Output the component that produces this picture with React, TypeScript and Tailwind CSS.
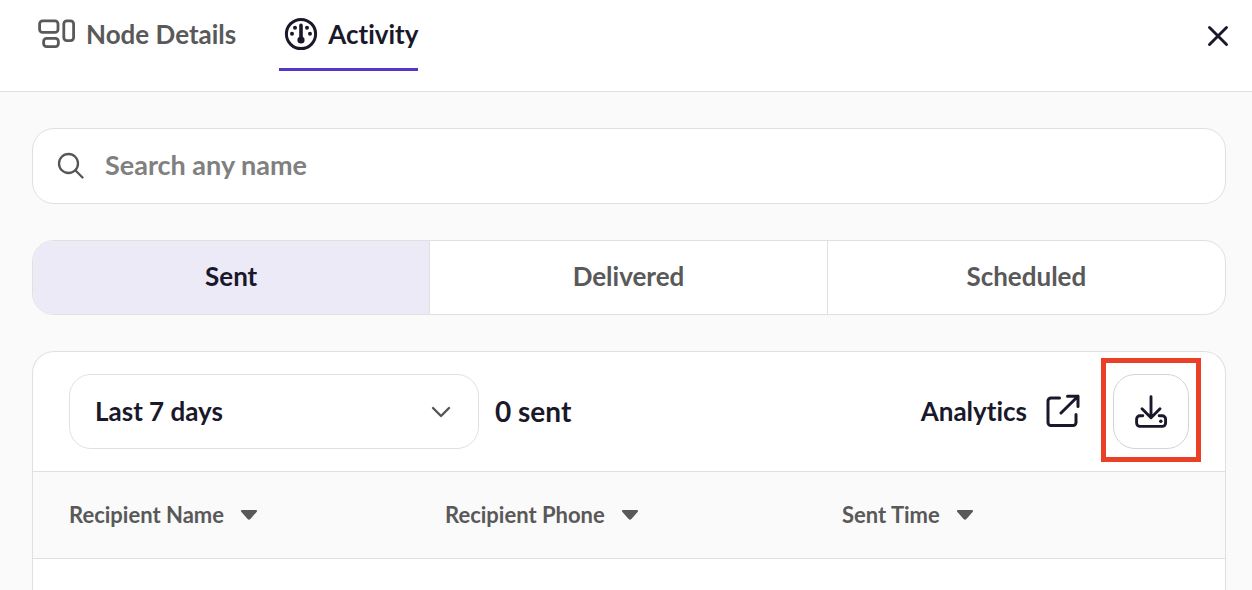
import React, { useState } from 'react';

type IconProps = { className?: string };

const NodesIcon = ({ className }: IconProps) => (
  <svg className={className} width="38" height="30" viewBox="0 0 38 30" fill="none" stroke="currentColor" strokeWidth="2.8" aria-hidden="true">
    <rect x="1.6" y="1.8" width="18.4" height="11.6" rx="3" />
    <rect x="5.6" y="19.4" width="14.8" height="8.2" rx="3" />
    <rect x="25.8" y="1.8" width="9.8" height="19.8" rx="3" />
  </svg>
);

const GaugeIcon = ({ className }: IconProps) => (
  <svg className={className} width="34" height="34" viewBox="0 0 34 34" fill="currentColor" aria-hidden="true">
    <circle cx="17" cy="17" r="14.6" fill="none" stroke="currentColor" strokeWidth="3" />
    <path d="M17 8.4V22" stroke="currentColor" strokeWidth="3.6" strokeLinecap="round" />
    <circle cx="17" cy="23" r="3.6" />
    <circle cx="11" cy="10.8" r="2" />
    <circle cx="23" cy="10.8" r="2" />
    <circle cx="8" cy="16.8" r="2" />
    <circle cx="26" cy="16.8" r="2" />
  </svg>
);

const CloseIcon = () => (
  <svg width="24" height="24" viewBox="0 0 24 24" fill="none" stroke="currentColor" strokeWidth="2.9" strokeLinecap="round" aria-hidden="true">
    <path d="M3.5 3.5l17 17M20.5 3.5l-17 17" />
  </svg>
);

const SearchIcon = ({ className }: IconProps) => (
  <svg className={className} width="28" height="28" viewBox="0 0 28 28" fill="none" stroke="currentColor" strokeWidth="2.3" strokeLinecap="round" aria-hidden="true">
    <circle cx="11.5" cy="11.5" r="9.5" />
    <path d="M18.3 18.3l7.2 7.2" />
  </svg>
);

const ChevronIcon = ({ className }: IconProps) => (
  <svg className={className} width="20" height="12" viewBox="0 0 20 12" fill="none" stroke="currentColor" strokeWidth="2.4" strokeLinecap="round" strokeLinejoin="round" aria-hidden="true">
    <path d="M2 2l8 8 8-8" />
  </svg>
);

const ExternalIcon = () => (
  <svg width="34" height="34" viewBox="0 0 34 34" fill="none" stroke="currentColor" strokeWidth="3" strokeLinecap="round" strokeLinejoin="round" aria-hidden="true">
    <path d="M13.5 4H5a3 3 0 0 0-3 3v21.5a3 3 0 0 0 3 3h22a3 3 0 0 0 3-3V20.5" />
    <path d="M21.5 2.2H32v10.3M32 2.2L15 19" />
  </svg>
);

const DownloadIcon = () => (
  <svg width="34" height="34" viewBox="0 0 34 34" fill="none" stroke="currentColor" strokeWidth="2.9" strokeLinecap="round" strokeLinejoin="round" aria-hidden="true">
    <path d="M17 1.8V22.6M8 13.8l9 9 9-9" />
    <path d="M8.8 20.8H6a3.4 3.4 0 0 0-3.4 3.4v3.8a3.4 3.4 0 0 0 3.4 3.4h22.2a3.4 3.4 0 0 0 3.4-3.4v-3.8a3.4 3.4 0 0 0-3.4-3.4h-3" />
    <circle cx="26.8" cy="26.2" r="1.7" fill="currentColor" stroke="none" />
  </svg>
);

const SortIcon = () => (
  <svg width="18" height="12" viewBox="0 0 18 12" fill="currentColor" aria-hidden="true">
    <path d="M2 1h14a1 1 0 0 1 .8 1.7L10.4 10a2 2 0 0 1-2.8 0L1.2 2.7A1 1 0 0 1 2 1z" />
  </svg>
);

const statuses = ['Sent', 'Delivered', 'Scheduled'];

const columns = [
  { label: 'Recipient Name', width: 'w-[376px]' },
  { label: 'Recipient Phone', width: 'w-[397px]' },
  { label: 'Sent Time', width: '' }
];

export default function App() {
  const [status, setStatus] = useState('Sent');
  const [query, setQuery] = useState('');
  const [range, setRange] = useState('7');

  return (
    <div className="min-h-screen flex flex-col bg-[#fafafa] text-[#1a182b] font-['Lato',sans-serif] [font-variant-ligatures:none] text-[26px] leading-8 font-bold">
      {/* Header */}
      <header className="flex items-start justify-between h-[92px] pl-[33px] pr-[22px] bg-white border-b border-[#e0e0e0]">
        <nav className="flex gap-[43px]">
          <button type="button" className="flex items-center gap-2.5 h-[71px] pl-[5px] pb-[3px] text-[#595959] cursor-pointer">
            <NodesIcon />
            Node Details
          </button>
          <button type="button" aria-current="page" className="flex items-center gap-2.5 h-[71px] pl-[5px] border-b-3 border-[#5736c4] cursor-pointer">
            <GaugeIcon />
            Activity
          </button>
        </nav>
        <button type="button" aria-label="Close" className="mt-6 cursor-pointer">
          <CloseIcon />
        </button>
      </header>

      <main className="flex-1 flex flex-col gap-9 pt-9 pl-8 pr-[26px]">
        <label className="flex items-center gap-5 h-[76px] px-6 bg-white border border-[#e0e0e0] rounded-[22px]">
          <SearchIcon className="shrink-0 text-[#555]" />
          <input
            type="text"
            aria-label="Search any name"
            placeholder="Search any name"
            value={query}
            onChange={(e) => setQuery(e.target.value)}
            className="flex-1 min-w-0 pb-0.5 text-[27px] outline-none placeholder:text-[#808080]"
          />
        </label>

        {/* Status filter */}
        <div className="grid grid-cols-3 h-[75px] bg-white border border-[#e0e0e0] rounded-[22px] divide-x divide-[#e0e0e0] overflow-hidden">
          {statuses.map((name) => (
            <button
              key={name}
              type="button"
              aria-pressed={status === name}
              onClick={() => setStatus(name)}
              className={`pb-1 cursor-pointer ${status === name ? 'bg-[#edeaf8] text-[#1a182b]' : 'text-[#595959]'}`}
            >
              {name}
            </button>
          ))}
        </div>

        <section className="flex-1 bg-white border border-b-0 border-[#e0e0e0] rounded-t-[22px] overflow-hidden">
          <div className="flex items-center px-9 py-[22px]">
            <div className="relative w-[410px]">
              <select
                aria-label="Date range"
                value={range}
                onChange={(e) => setRange(e.target.value)}
                className="w-full h-[75px] px-[25px] pb-0.5 appearance-none bg-white border border-[#e0e0e0] rounded-[22px] cursor-pointer"
              >
                <option value="7">Last 7 days</option>
              </select>
              <ChevronIcon className="absolute right-7 top-8 text-[#555] pointer-events-none" />
            </div>
            <p className="ml-4 pb-0.5 text-[28px]">0 sent</p>
            <a href="#analytics" className="flex items-center gap-[19px] ml-auto pb-0.5">
              Analytics
              <ExternalIcon />
            </a>
            <div className="relative ml-[33px]">
              <button type="button" aria-label="Download" className="flex items-center justify-center w-[76px] h-[75px] border border-[#d4d4d4] rounded-[22px] cursor-pointer">
                <DownloadIcon />
              </button>
              <span className="absolute -inset-x-3 -top-4 -bottom-[13px] border-5 border-[#ea4025] pointer-events-none" />
            </div>
          </div>

          <table className="w-full table-fixed text-[22px] text-[#595959]">
            <thead>
              <tr className="h-[87px] bg-[#fafafa] border-y border-[#e0e0e0]">
                {columns.map((col) => (
                  <th key={col.label} scope="col" className={`pl-9 text-left ${col.width}`}>
                    <button type="button" className="flex items-center gap-4 cursor-pointer">
                      {col.label}
                      <SortIcon />
                    </button>
                  </th>
                ))}
              </tr>
            </thead>
          </table>
        </section>
      </main>
    </div>
  );
}
